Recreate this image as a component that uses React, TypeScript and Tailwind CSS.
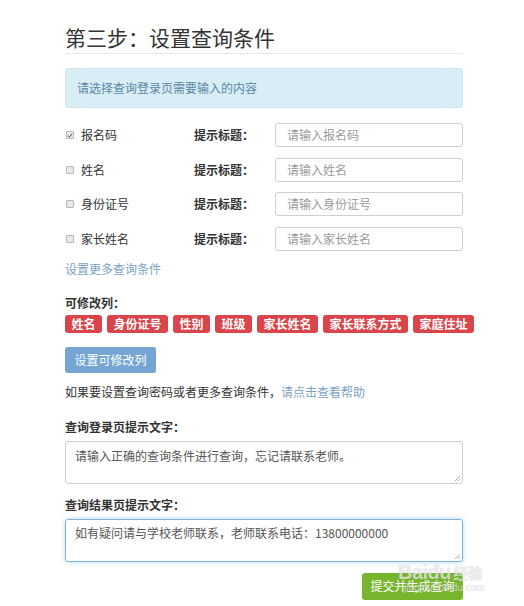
import React from 'react'

const font = { fontFamily: '"Noto Sans CJK SC", "Noto Sans", sans-serif' }

const conditions = [
  { label: '报名码', placeholder: '请输入报名码', checked: true },
  { label: '姓名', placeholder: '请输入姓名', checked: false },
  { label: '身份证号', placeholder: '请输入身份证号', checked: false },
  { label: '家长姓名', placeholder: '请输入家长姓名', checked: false },
]

const columns = ['姓名', '身份证号', '性别', '班级', '家长姓名', '家长联系方式', '家庭住址']

function Checkbox({ checked }: { checked: boolean }) {
  return (
    <span className="flex h-[8px] w-[8px] items-center justify-center rounded-[1px] border border-[#b9b9b9] bg-[#e8e8e8]">
      {checked && (
        <svg viewBox="0 0 8 8" className="h-[7px] w-[7px]">
          <path d="M1.2 4.2 L3.2 6 L6.8 1.6" fill="none" stroke="#444" strokeWidth="1.3" />
        </svg>
      )}
    </span>
  )
}

export default function App() {
  return (
    <div className="relative min-h-[606px] w-[524px] bg-white text-[12px] text-[#333]" style={font}>
      <div className="ml-[65px] w-[398px] pt-[22px]">
        <h1 className="text-[21px] leading-[30px] font-normal text-[#333]">第三步：设置查询条件</h1>
        <div className="mt-[1px] h-px bg-[#e6e6e6]" />

        <div className="mt-[14px] flex h-[40px] items-center rounded-[3px] border border-[#cfe6f2] bg-[#d9edf7] px-[11px] text-[12px] text-[#5a86a3]">
          请选择查询登录页需要输入的内容
        </div>

        <div className="mt-[15px] flex flex-col gap-[10.5px]">
          {conditions.map((c) => (
            <div key={c.label} className="flex h-[24px] items-center">
              <div className="flex w-[129px] items-center gap-[7px] pl-[1px]">
                <Checkbox checked={c.checked} />
                <span>{c.label}</span>
              </div>
              <span className="w-[81px] font-bold">提示标题：</span>
              <div className="flex h-[24px] flex-1 items-center rounded-[3px] border border-[#cfcfcf] px-[11px] text-[#9a9a9a]">
                {c.placeholder}
              </div>
            </div>
          ))}
        </div>

        <div className="mt-[9px] leading-[18px] text-[#7ba1c2]">设置更多查询条件</div>

        <div className="mt-[16px] leading-[18px] font-bold">可修改列：</div>
        <div className="mt-[3px] flex gap-[5px] whitespace-nowrap">
          {columns.map((c) => (
            <span
              key={c}
              className="flex h-[18px] items-center rounded-[3px] bg-[#d9454a] px-[6.5px] text-[12px] font-bold text-white"
            >
              {c}
            </span>
          ))}
        </div>

        <button
          type="button"
          className="mt-[14px] flex h-[26px] w-[91px] items-center justify-center rounded-[3px] bg-[#74a5d3] text-[12px] text-white"
        >
          设置可修改列
        </button>

        <div className="mt-[10px] leading-[18px]">
          如果要设置查询密码或者更多查询条件，<span className="text-[#7ba1c2]">请点击查看帮助</span>
        </div>

        <div className="mt-[17px] leading-[18px] font-bold">查询登录页提示文字：</div>
        <div className="relative mt-[5px] h-[43px] rounded-[3px] border border-[#cfcfcf] px-[9px] pt-[5px] leading-[18px] text-[#555]">
          请输入正确的查询条件进行查询，忘记请联系老师。
          <svg viewBox="0 0 8 8" className="absolute right-[1px] bottom-[1px] h-[8px] w-[8px]">
            <path d="M2 7 L7 2 M5 7 L7 5" stroke="#999" strokeWidth="0.8" />
          </svg>
        </div>

        <div className="mt-[12px] leading-[18px] font-bold">查询结果页提示文字：</div>
        <div className="relative mt-[5px] h-[43px] rounded-[3px] border border-[#7fb3e0] px-[9px] pt-[4px] leading-[18px] text-[#555] shadow-[0_0_5px_rgba(102,175,233,0.5)]">
          如有疑问请与学校老师联系，老师联系电话：13800000000
          <svg viewBox="0 0 8 8" className="absolute right-[1px] bottom-[1px] h-[8px] w-[8px]">
            <path d="M2 7 L7 2 M5 7 L7 5" stroke="#999" strokeWidth="0.8" />
          </svg>
        </div>

        <div className="mt-[11px] flex justify-end">
          <button
            type="button"
            className="flex h-[27px] w-[101px] items-center justify-center rounded-[3px] bg-[#77b52d] text-[12px] text-white"
          >
            提交并生成查询
          </button>
        </div>
      </div>

      <div
        className="pointer-events-none absolute top-[562px] left-[398px] flex flex-col items-start leading-none text-white/70"
        style={{ fontFamily: '"Liberation Sans", "Noto Sans CJK SC", sans-serif' }}
      >
        <span className="text-[20px] font-bold tracking-tight [text-shadow:0_0_1px_rgba(0,0,0,0.25)]">
          Baidu<span className="ml-[2px] text-[15px]">经验</span>
        </span>
        <span className="mt-[1px] ml-[6px] text-[10px] [text-shadow:0_0_1px_rgba(0,0,0,0.25)]">jingyan.baidu.com</span>
      </div>
    </div>
  )
}
